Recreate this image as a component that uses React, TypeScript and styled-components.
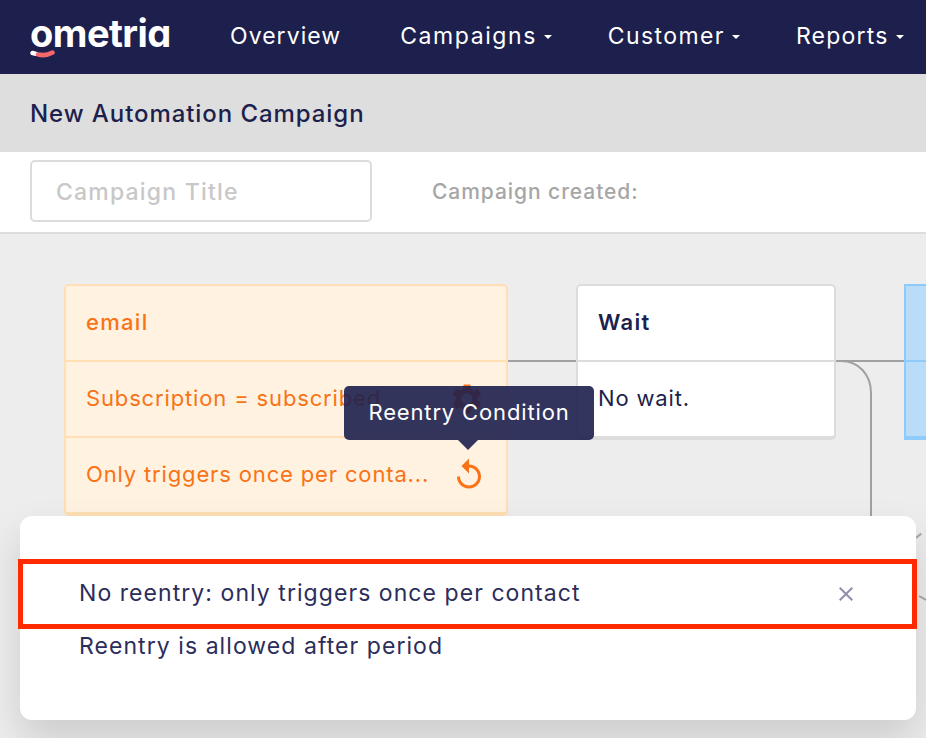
import React from "react";
import styled, { createGlobalStyle } from "styled-components";
import { MdReplay, MdSettings, MdClose } from "react-icons/md";

const GlobalStyle = createGlobalStyle`
  html, body {
    margin: 0;
    padding: 0;
    height: 100%;
    overflow: hidden;
    font-family: "Inter", "Liberation Sans", sans-serif;
  }
  #root {
    height: 100%;
  }
`;

const NAV_ITEMS = [
  { label: "Overview", caret: false, track: 1.05 },
  { label: "Campaigns", caret: true, track: 1.57 },
  { label: "Customer", caret: true, track: 1.4 },
  { label: "Reports", caret: true, track: 1.2 },
];

const App: React.FC = () => {
  return (
    <>
      <GlobalStyle />
      <Page>
        <Header>
          <Logo>
            <LogoText>ometria</LogoText>
            <LogoSmile width="25" height="8" viewBox="0 0 25 8">
              <path d="M2.5 3 L6 3.8" stroke="#fff" strokeWidth="4.4" strokeLinecap="round" />
              <path d="M8 4.6 C13 5.6 18 5.2 22.5 2.6" stroke="#f4686c" strokeWidth="4.6" strokeLinecap="round" fill="none" />
            </LogoSmile>
          </Logo>
          <Nav>
            {NAV_ITEMS.map((item) => (
              <NavItem key={item.label} $track={item.track} $caret={item.caret}>
                {item.label}
                {item.caret && <Caret />}
              </NavItem>
            ))}
          </Nav>
        </Header>
        <SubHeader>
          <PageTitle>New Automation Campaign</PageTitle>
        </SubHeader>
        <TitleRow>
          <TitleInput>Campaign Title</TitleInput>
          <CreatedLabel>Campaign created:</CreatedLabel>
        </TitleRow>
        <Canvas>
          <Wires width="926" height="504" viewBox="0 0 926 504">
            <path d="M508 127 H576 M836 127 H904" stroke="#a0a0a0" strokeWidth="2" fill="none" />
            <path d="M836 127 H841 C859 127 871 141 871 159 V290" stroke="#a0a0a0" strokeWidth="2" fill="none" />
            <path d="M916 304 C919 301 922 299 926 297" stroke="#a8a8a8" strokeWidth="2" strokeDasharray="7 5" fill="none" />
            <path d="M919 362 L926 366" stroke="#a8a8a8" strokeWidth="2" fill="none" />
          </Wires>

          <EmailNode>
            <NodeHead $tone="orange">email</NodeHead>
            <NodeRow $tone="orange">
              <RowText>Subscription = subscribed</RowText>
              <RowIcon $inset={1} $drop={1}>
                <MdSettings size={36} />
              </RowIcon>
            </NodeRow>
            <NodeRow $tone="orange">
              <RowText>Only triggers once per conta...</RowText>
              <RowIcon $inset={-1} $drop={2}>
                <MdReplay size={36} />
              </RowIcon>
            </NodeRow>
          </EmailNode>

          <WaitNode>
            <NodeHead $tone="plain">Wait</NodeHead>
            <NodeRow $tone="plain">
              <RowText>No wait.</RowText>
            </NodeRow>
          </WaitNode>

          <BlueNode>
            <BlueRow />
            <BlueRow />
          </BlueNode>

          <Tooltip>Reentry Condition</Tooltip>

          <Modal>
            <OptionSelected>
              <OptionText>No reentry: only triggers once per contact</OptionText>
              <CloseIcon>
                <MdClose size={24} />
              </CloseIcon>
            </OptionSelected>
            <Option>
              <OptionText>Reentry is allowed after period</OptionText>
            </Option>
          </Modal>
        </Canvas>
      </Page>
    </>
  );
};

export default App;

interface ToneProps {
  $tone: "orange" | "plain";
}

const Page = styled.div`
  display: flex;
  flex-direction: column;
  height: 738px;
  width: 926px;
  overflow: hidden;
`;

const Header = styled.header`
  display: flex;
  align-items: center;
  height: 74px;
  padding-left: 30px;
  background-color: #1d1f4d;
  color: #fff;
  flex-shrink: 0;
`;

const Logo = styled.div`
  position: relative;
  width: 140px;
  height: 50px;
`;

const LogoText = styled.span`
  position: absolute;
  left: 0;
  top: 1px;
  font-size: 38px;
  line-height: 40px;
  font-weight: 700;
  letter-spacing: -0.55px;
  font-feature-settings: "cv11";
  color: #fff;
`;

const LogoSmile = styled.svg`
  position: absolute;
  left: 0;
  top: 38px;
`;

const Nav = styled.nav`
  display: flex;
  align-items: center;
  gap: 56px;
  margin-left: 60px;
  padding-bottom: 3px;
  white-space: nowrap;
`;

const NavItem = styled.div<{ $track: number; $caret: boolean }>`
  display: flex;
  align-items: center;
  margin-right: ${(p) => (p.$caret ? 0 : 3)}px;
  font-size: 23px;
  letter-spacing: ${(p) => p.$track}px;
  color: #fff;
`;

const Caret = styled.span`
  display: inline-block;
  margin-left: 7px;
  margin-top: 3px;
  border-top: 4px solid #fff;
  border-left: 4.5px solid transparent;
  border-right: 4.5px solid transparent;
`;

const SubHeader = styled.div`
  display: flex;
  align-items: center;
  height: 78px;
  padding-left: 30px;
  background-color: #dedede;
  flex-shrink: 0;
`;

const PageTitle = styled.h1`
  margin: 0;
  font-size: 24px;
  font-weight: 500;
  letter-spacing: 0.93px;
  color: #1d1f4d;
`;

const TitleRow = styled.div`
  display: flex;
  align-items: center;
  height: 78px;
  padding: 0 0 2px 30px;
  background-color: #fff;
  border-bottom: 2px solid #dcdcdc;
  flex-shrink: 0;
`;

const TitleInput = styled.div`
  display: flex;
  align-items: center;
  box-sizing: border-box;
  width: 342px;
  height: 62px;
  padding-left: 24px;
  padding-top: 2px;
  border: 2px solid #dcdcdc;
  border-radius: 5px;
  font-size: 23px;
  font-weight: 500;
  letter-spacing: 1.2px;
  color: #c8c8c8;
`;

const CreatedLabel = styled.div`
  margin-left: 60px;
  font-size: 21px;
  font-weight: 500;
  letter-spacing: 0.94px;
  color: #a6a6a6;
`;

const Canvas = styled.main`
  position: relative;
  flex: 1;
  background-color: #ededed;
`;

const Wires = styled.svg`
  position: absolute;
  left: 0;
  top: 0;
`;

const NodeBase = styled.div`
  position: absolute;
  top: 50px;
  box-sizing: border-box;
  border-radius: 5px;
  border-style: solid;
  border-width: 2px 2px 4px 2px;
`;

const EmailNode = styled(NodeBase)`
  left: 64px;
  width: 444px;
  background-color: #fff2e0;
  border-color: #ffdfb3;
`;

const WaitNode = styled(NodeBase)`
  left: 576px;
  width: 260px;
  background-color: #fff;
  border-color: #dcdcdc;
`;

const BlueNode = styled(NodeBase)`
  left: 904px;
  width: 60px;
  background-color: #b9dcf9;
  border-color: #8fcbfa;
  border-radius: 0;
`;

const BlueRow = styled.div`
  height: 74px;
  & + & {
    border-top: 2px solid #8fcbfa;
  }
`;

const NodeHead = styled.div<ToneProps>`
  display: flex;
  align-items: center;
  box-sizing: border-box;
  height: 74px;
  padding: 0 0 2px 20px;
  font-size: 22px;
  font-weight: ${(p) => (p.$tone === "orange" ? 500 : 600)};
  letter-spacing: 1.3px;
  color: ${(p) => (p.$tone === "orange" ? "#f97316" : "#1d1f4d")};
`;

const NodeRow = styled.div<ToneProps>`
  display: flex;
  align-items: center;
  justify-content: space-between;
  box-sizing: border-box;
  height: 76px;
  padding: 0 20px 2px;
  border-top: 2px solid ${(p) => (p.$tone === "orange" ? "#ffdfb3" : "#dcdcdc")};
  font-size: 22px;
  letter-spacing: 0.85px;
  color: ${(p) => (p.$tone === "orange" ? "#f97316" : "#1d1f4d")};
`;

const RowText = styled.span`
  white-space: nowrap;
`;

const RowIcon = styled.span<{ $inset: number; $drop: number }>`
  display: flex;
  margin-right: ${(p) => p.$inset}px;
  margin-top: ${(p) => p.$drop}px;
  color: #f97316;
`;

const Tooltip = styled.div`
  position: absolute;
  left: 344px;
  top: 152px;
  z-index: 2;
  display: flex;
  align-items: center;
  justify-content: center;
  box-sizing: border-box;
  width: 250px;
  height: 54px;
  padding-bottom: 2px;
  border-radius: 5px;
  background-color: rgba(29, 31, 77, 0.9);
  color: #fff;
  font-size: 22px;
  letter-spacing: 0.85px;

  &::after {
    content: "";
    position: absolute;
    left: 114px;
    top: 54px;
    border-top: 10px solid rgba(29, 31, 77, 0.9);
    border-left: 10px solid transparent;
    border-right: 10px solid transparent;
  }
`;

const Modal = styled.div`
  position: absolute;
  left: 20px;
  top: 282px;
  z-index: 3;
  box-sizing: border-box;
  width: 896px;
  height: 204px;
  padding-top: 43px;
  border-radius: 12px;
  background-color: #fff;
  box-shadow: 0 20px 40px rgba(0, 0, 0, 0.14);
`;

const OptionSelected = styled.div`
  display: flex;
  align-items: center;
  justify-content: space-between;
  box-sizing: border-box;
  width: 899px;
  height: 70px;
  margin-left: -2px;
  padding: 0 54px 3px 56px;
  border: 5px solid #ff2a00;
`;

const Option = styled.div`
  display: flex;
  align-items: center;
  height: 34px;
  padding: 0 59px;
`;

const OptionText = styled.span`
  font-size: 23px;
  letter-spacing: 1.06px;
  color: #2b2d5b;
  white-space: nowrap;
`;

const CloseIcon = styled.span`
  display: flex;
  margin-top: 3px;
  color: #8f8fab;
`;
